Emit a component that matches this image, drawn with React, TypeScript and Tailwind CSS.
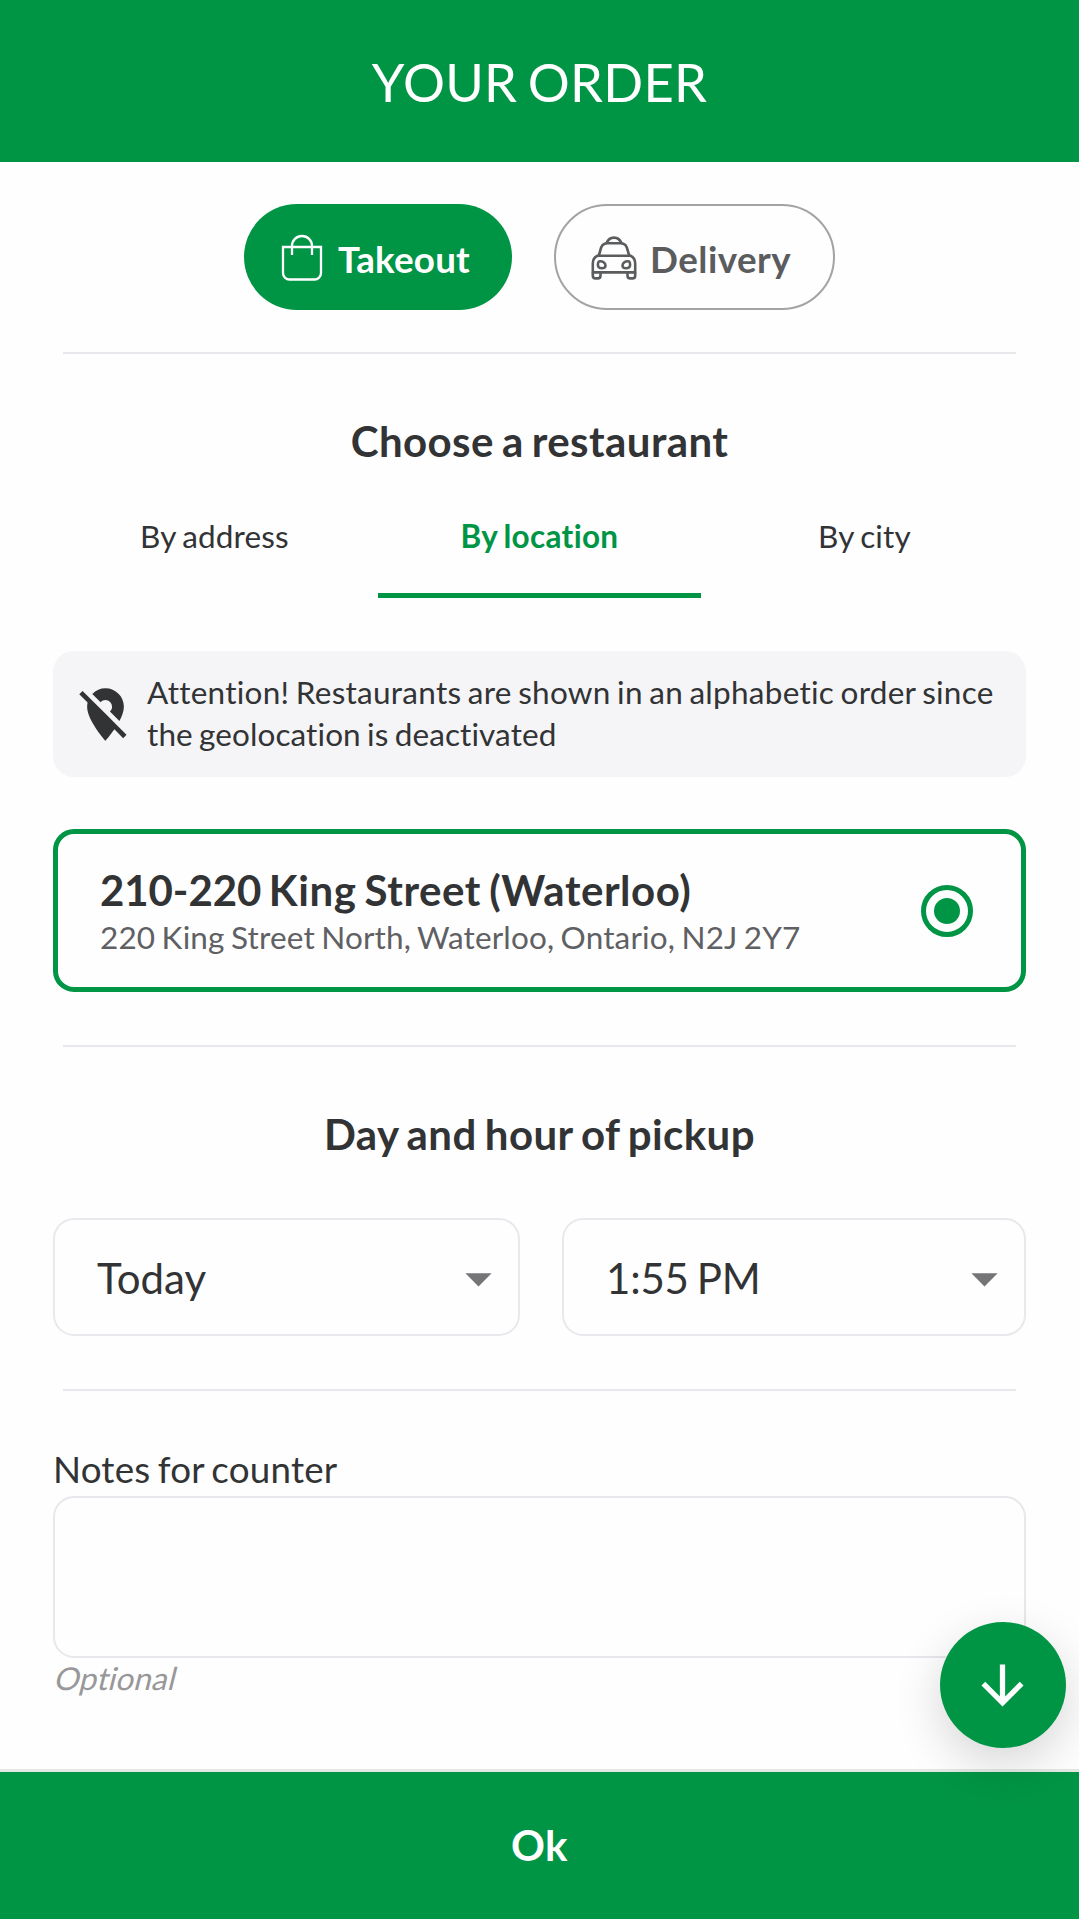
import { useState } from "react";
import {
  MdArrowDownward,
  MdArrowDropDown,
  MdLocationOff,
} from "react-icons/md";

const tabs = ["By address", "By location", "By city"];

// slightly tighter word gaps, slightly looser letters
const regularText = "[word-spacing:-0.06em] tracking-[0.005em]";
const boldText = "font-bold [word-spacing:-0.06em] tracking-[0.01em]";

const BagIcon = () => (
  <svg
    width="42"
    height="48"
    viewBox="0 0 42 48"
    fill="none"
    stroke="currentColor"
    strokeWidth="2.3"
    className="mt-[1px] shrink-0"
  >
    <path d="M2 13h38v26a6.500 6.500 0 0 1-6.500 6.500H8.500A6.500 6.500 0 0 1 2 39z" />
    <path d="M11 21v-9a10 10 0 0 1 20 0v9" />
  </svg>
);

const TaxiIcon = () => (
  <svg
    width="46"
    height="44"
    viewBox="0 0 46 44"
    fill="none"
    stroke="currentColor"
    strokeWidth="2.6"
    strokeLinejoin="round"
    className="mt-[1px] shrink-0"
  >
    <path d="M15.500 7.200C17 3.500 19.500 1.600 23 1.600s6 1.900 7.500 5.600" />
    <path d="M7.500 19.800c1.800-3 1.600-7.800 4-10.600 1.400-1.600 3-2 5-2h13c2 0 3.600.4 5 2 2.400 2.800 2.200 7.600 4 10.600" />
    <path d="M6.500 19.800h33c3 1.400 4.700 4 4.700 7.600v9H1.800v-9c0-3.600 1.700-6.200 4.700-7.600z" />
    <path d="M1.800 36.400v3c0 2 1 3 2.700 3h2.300c1.700 0 2.700-1 2.700-3v-3M36.500 36.400v3c0 2 1 3 2.700 3h2.300c1.700 0 2.700-1 2.700-3v-3" />
    <path d="M7.800 25.500c3.500-.8 6.700 1.200 6.700 3.900 0 1.800-1.400 2.800-3.600 2.800-2.600 0-4-1.400-4-3.500 0-1.400.2-2.400.9-3.200zM38.200 25.500c-3.500-.8-6.700 1.200-6.700 3.900 0 1.800 1.400 2.800 3.600 2.800 2.600 0 4-1.400 4-3.500 0-1.400-.2-2.400-.9-3.200z" />
  </svg>
);

const Divider = () => <div className="mx-[63px] h-[2px] bg-[#e8e7eb]" />;

const Select = ({ value, className }: { value: string; className: string }) => (
  <button
    className={`flex h-[118px] items-center justify-between rounded-[21px] border-2 border-[#e9e8ec] pl-[42px] pr-[8px] text-[42px] leading-[50px] cursor-pointer [word-spacing:-0.06em] ${className}`}
  >
    <span className="mt-[2px]">{value}</span>
    <MdArrowDropDown className="mt-[2px] h-[63px] w-[63px] text-[#757477]" />
  </button>
);

const App = () => {
  const [activeTab, setActiveTab] = useState("By location");

  return (
    <div className="relative flex h-[1919px] w-[1079px] flex-col overflow-hidden bg-[#fefefe] font-['Lato',sans-serif] text-[#323335]">
      <header className="flex h-[162px] shrink-0 items-center justify-center bg-[#009545] pt-[2px]">
        <h1 className={`text-[52.5px] leading-[62px] text-white ${regularText}`}>
          YOUR ORDER
        </h1>
      </header>

      <main className="flex flex-1 flex-col">
        <div
          className={`mt-[42px] flex justify-center gap-[42px] text-[36.75px] leading-[44px] ${boldText}`}
        >
          <button className="flex h-[106px] w-[268px] items-center rounded-full bg-[#009545] pl-[37px] text-white cursor-pointer">
            <BagIcon />
            <span className="ml-[15px] mt-[3px] tracking-[0.006em]">
              Takeout
            </span>
          </button>
          <button className="flex h-[106px] w-[281px] items-center rounded-full border-2 border-[#a3a2a4] pl-[35px] text-[#5b5c5e] cursor-pointer">
            <TaxiIcon />
            <span className="ml-[13px] mt-[3px] tracking-[0.013em]">
              Delivery
            </span>
          </button>
        </div>

        <div className="mt-[42px]">
          <Divider />
        </div>

        <h2
          className={`mt-[62px] text-center text-[42px] leading-[50px] ${boldText}`}
        >
          Choose a restaurant
        </h2>

        <div className="mx-[53px] mt-[49px] grid grid-cols-3 gap-[2px] text-[31.5px] leading-[42px]">
          {tabs.map((tab) => (
            <button
              key={tab}
              onClick={() => setActiveTab(tab)}
              className={`h-[83px] border-b-[5px] pb-[36px] cursor-pointer ${
                activeTab === tab
                  ? `border-[#009545] text-[#009545] ${boldText}`
                  : `border-transparent ${regularText}`
              }`}
            >
              {tab}
            </button>
          ))}
        </div>

        <div className="ml-[53px] mr-[53px] mt-[53px] flex h-[126px] items-center rounded-[21px] bg-[#f5f5f7] pl-[21px]">
          <MdLocationOff className="h-[63px] w-[63px] shrink-0" />
          <p className="ml-[10px] w-[870px] pb-[3px] text-[31.5px] leading-[42px] [word-spacing:-0.06em]">
            <span className="tracking-[0.0085em]">
              Attention! Restaurants are shown in an alphabetic order since
            </span>
            <br />
            <span className="tracking-[0.003em]">
              the geolocation is deactivated
            </span>
          </p>
        </div>

        <div className="ml-[53px] mr-[53px] mt-[52px] flex h-[163px] items-center justify-between rounded-[21px] border-[5px] border-[#009545] pl-[42px] pr-[48px]">
          <div className="pt-[3px]">
            <p
              className={`text-[42px] leading-[50px] ${boldText}`}
            >
              <span className="tracking-[-0.002em]">210-220 </span>
              <span className="tracking-[0.013em]">King Street (Waterloo)</span>
            </p>
            <p
              className={`text-[31.5px] leading-[44px] text-[#5f6063] ${regularText}`}
            >
              220 King Street North, Waterloo, Ontario, N2J 2Y7
            </p>
          </div>
          <div className="flex h-[52px] w-[52px] items-center justify-center rounded-full border-[5px] border-[#009545]">
            <div className="h-[26px] w-[26px] rounded-full bg-[#009545]" />
          </div>
        </div>

        <div className="mt-[53px]">
          <Divider />
        </div>

        <h2
          className={`mt-[62px] text-center text-[42px] leading-[50px] ${boldText}`}
        >
          Day and hour of pickup
        </h2>

        <div className="ml-[53px] mt-[59px] flex gap-[42px]">
          <Select value="Today" className="w-[467px]" />
          <Select value="1:55 PM" className="w-[464px] tracking-[-0.005em]" />
        </div>

        <div className="mt-[53px]">
          <Divider />
        </div>

        <div className="mx-[53px] mt-[56px] flex flex-col items-start">
          <label className={`text-[36.75px] leading-[44px] ${regularText}`}>
            Notes for counter
          </label>
          <textarea className="mt-[5px] h-[162px] w-full resize-none rounded-[21px] border-2 border-[#e8e7eb]" />
          <span
            className={`-mt-[1px] ml-[3px] inline-block -skew-x-[14deg] text-[31.5px] leading-[42px] text-[#98979a] ${regularText}`}
          >
            Optional
          </span>
        </div>
      </main>

      <button className="absolute left-[940px] top-[1622px] flex h-[126px] w-[126px] items-center justify-center rounded-full bg-[#009545] pr-[1px] text-white shadow-[0_16px_48px_rgba(0,0,0,0.16)] cursor-pointer">
        <MdArrowDownward className="h-[63px] w-[63px]" />
      </button>

      <footer
        className={`flex h-[150px] shrink-0 items-center justify-center border-t-[3px] border-[#e3e8e2] bg-[#009545] pb-[2px] text-[42px] leading-[50px] text-white ${boldText}`}
      >
        Ok
      </footer>
    </div>
  );
};

export default App;
